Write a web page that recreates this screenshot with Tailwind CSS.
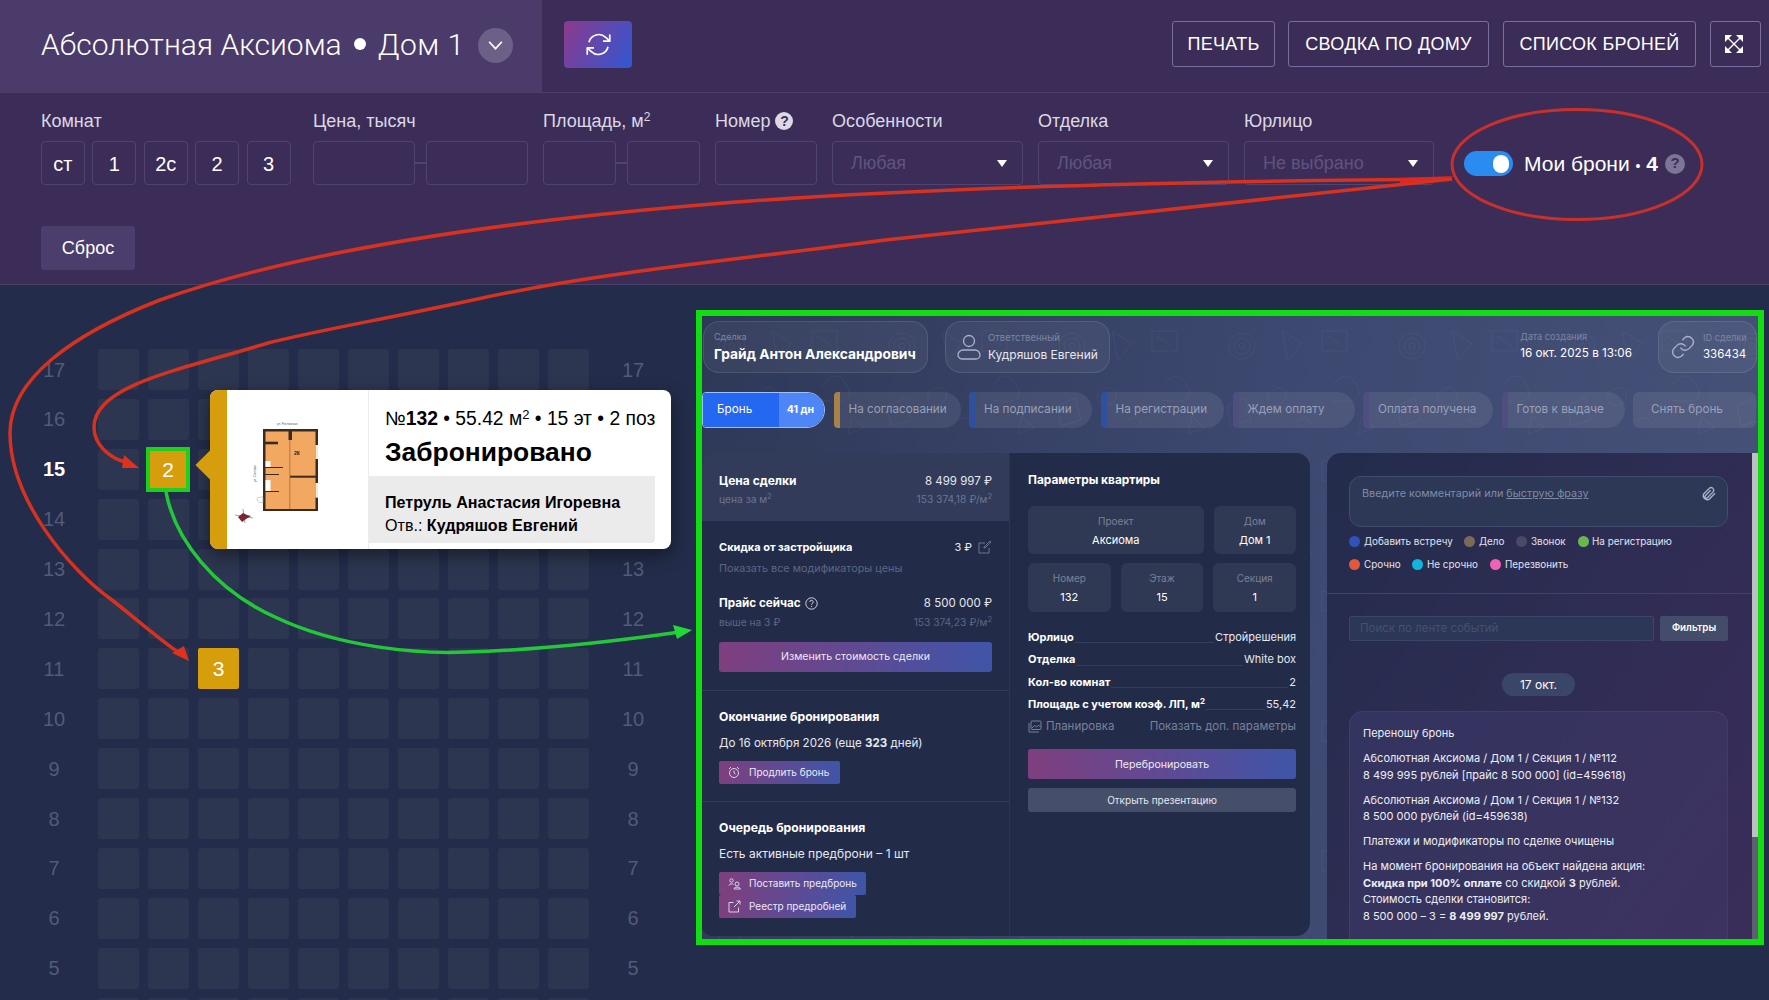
<!DOCTYPE html>
<html lang="ru">
<head>
  <meta charset="UTF-8">
  <title>Абсолютная Аксиома - Дом 1</title>
  <script src="https://cdn.jsdelivr.net/npm/@tailwindcss/browser@4"></script>
</head>
<body class="bg-[#232c4a] font-['Liberation_Sans',sans-serif] text-white">
<div class="relative h-[1000px] w-full overflow-hidden">

  <!-- шапка -->
  <header class="flex h-[93px] border-b border-[#4a3e68] bg-[#3b2d58]">
    <div class="flex h-[92px] w-[542px] items-center bg-[#4b3b6b] pb-[4px] pl-[41px]">
      <h1 class="flex w-[437px] items-center font-[Roboto,sans-serif] text-[30px] font-light whitespace-nowrap text-white">Абсолютная Аксиома<span class="mx-[12px] h-[12px] w-[12px] rounded-full bg-white"></span><span class="tracking-[0.5px]">Дом 1</span></h1>
      <button class="mt-[2px] flex h-[35px] w-[35px] items-center justify-center rounded-full bg-[#6c5f88]">
        <svg width="17" height="11" viewBox="0 0 16 10" fill="none" stroke="#fff" stroke-width="1.600"><path d="M2 1.500l6 6.500 6-6.500"/></svg>
      </button>
    </div>
    <button class="mt-[21px] ml-[22px] flex h-[47px] w-[68px] items-center justify-center rounded bg-[linear-gradient(120deg,#8c3a8c,#3157d2)]">
      <svg width="27" height="27" viewBox="0 0 24 24" fill="none" stroke="#fff" stroke-width="1.500" stroke-linejoin="round"><path d="M22 3v6h-6M2 21v-6h6"/><path d="M3.500 10a9 9 0 0 1 14.900-4.400L22 9M2 15l3.600 3.400A9 9 0 0 0 20.500 14"/></svg>
    </button>
    <div class="mt-[21px] ml-auto flex h-[46px] pr-[8px] text-[18px] tracking-[0.3px]">
      <button class="w-[103px] rounded-[3px] border-[1.500px] border-[#7a6ea0]">ПЕЧАТЬ</button>
      <button class="ml-[13px] w-[201px] rounded-[3px] border-[1.500px] border-[#7a6ea0]">СВОДКА ПО ДОМУ</button>
      <button class="ml-[14px] w-[193px] rounded-[3px] border-[1.500px] border-[#7a6ea0]">СПИСОК БРОНЕЙ</button>
      <button class="ml-[14px] flex w-[51px] items-center justify-center rounded-[3px] border-[1.500px] border-[#7a6ea0] pr-[3px]">
        <svg width="20" height="20" viewBox="0 0 20 20" fill="#fff" stroke="#fff"><path d="M3 3l14 14M17 3L3 17" stroke-width="1.400"/><path d="M1 1h7L1 8zM19 1v7l-7-7zM1 19v-7l7 7zM19 19h-7l7-7z" stroke="none"/></svg>
      </button>
    </div>
  </header>

  <!-- фильтры -->
  <section class="h-[192px] border-b border-[#4a4266] bg-[#3b2d58] pt-[16px] pl-[41px]">
    <div class="flex items-start">
      <div class="w-[249.500px]">
        <div class="h-6 text-[18px] leading-6 text-[#dcd8e6]">Комнат</div>
        <div class="mt-[8px] flex gap-[7.500px] text-[20px]">
          <button class="h-[44px] w-[44px] rounded border border-[#4f4470] pt-[2px]">ст</button>
          <button class="h-[44px] w-[44px] rounded border border-[#4f4470] pt-[2px]">1</button>
          <button class="h-[44px] w-[44px] rounded border border-[#4f4470] pt-[2px]">2с</button>
          <button class="h-[44px] w-[44px] rounded border border-[#4f4470] pt-[2px]">2</button>
          <button class="h-[44px] w-[44px] rounded border border-[#4f4470] pt-[2px]">3</button>
        </div>
      </div>
      <div class="ml-[22.500px] w-[215px]">
        <div class="h-6 text-[18px] leading-6 text-[#dcd8e6]">Цена, тысяч</div>
        <div class="mt-[8px] flex items-center">
          <div class="h-[44px] w-[102px] rounded border border-[#4f4470]"></div>
          <div class="h-[2px] w-[11px] bg-[#4f4470]"></div>
          <div class="h-[44px] w-[102px] rounded border border-[#4f4470]"></div>
        </div>
      </div>
      <div class="ml-[15px] w-[157px]">
        <div class="h-6 text-[18px] leading-6 text-[#dcd8e6]">Площадь, м<sup class="text-[12px]">2</sup></div>
        <div class="mt-[8px] flex items-center">
          <div class="h-[44px] w-[73px] rounded border border-[#4f4470]"></div>
          <div class="h-[2px] w-[11px] bg-[#4f4470]"></div>
          <div class="h-[44px] w-[73px] rounded border border-[#4f4470]"></div>
        </div>
      </div>
      <div class="ml-[15px] w-[102px]">
        <div class="flex h-6 items-center gap-[5px] text-[18px] leading-6 text-[#dcd8e6]">Номер
          <span class="flex h-[18px] w-[18px] items-center justify-center rounded-full bg-[#dcd8e6] text-[14px] font-bold text-[#3b2d58]">?</span>
        </div>
        <div class="mt-[8px] h-[44px] rounded border border-[#4f4470]"></div>
      </div>
      <div class="ml-[15px] w-[191px]">
        <div class="h-6 text-[18px] leading-6 text-[#dcd8e6]">Особенности</div>
        <div class="mt-[8px] flex h-[44px] items-center justify-between rounded border border-[#4f4470] pt-[1px] pr-[15px] pl-[18px] text-[18px] text-[#5f5480]">Любая
          <span class="h-0 w-0 border-x-[5.500px] border-t-[7px] border-x-transparent border-t-white"></span>
        </div>
      </div>
      <div class="ml-[15px] w-[191px]">
        <div class="h-6 text-[18px] leading-6 text-[#dcd8e6]">Отделка</div>
        <div class="mt-[8px] flex h-[44px] items-center justify-between rounded border border-[#4f4470] pt-[1px] pr-[15px] pl-[18px] text-[18px] text-[#5f5480]">Любая
          <span class="h-0 w-0 border-x-[5.500px] border-t-[7px] border-x-transparent border-t-white"></span>
        </div>
      </div>
      <div class="ml-[15px] w-[190px]">
        <div class="h-6 text-[18px] leading-6 text-[#dcd8e6]">Юрлицо</div>
        <div class="mt-[8px] flex h-[44px] items-center justify-between rounded border border-[#4f4470] pt-[1px] pr-[15px] pl-[18px] text-[18px] text-[#5f5480]">Не выбрано
          <span class="h-0 w-0 border-x-[5.500px] border-t-[7px] border-x-transparent border-t-white"></span>
        </div>
      </div>
      <div class="mt-[42px] ml-[30px] flex h-[25px] items-center">
        <div class="flex h-[25px] w-[49px] items-center justify-end rounded-full bg-[#2a8cf0] pr-[4px]"><span class="h-[18px] w-[16px] rounded-full bg-white"></span></div>
        <span class="ml-[11px] text-[21px] whitespace-nowrap">Мои брони <span class="text-[14px]">•</span> <b class="font-bold">4</b></span>
        <span class="ml-[7px] flex h-[20px] w-[20px] items-center justify-center rounded-full bg-[#7d7497] text-[15px] font-bold text-[#3b2d58]">?</span>
      </div>
    </div>
    <button class="mt-[41px] h-[44px] w-[94px] rounded-[3px] bg-[#4b3d6c] pt-[1px] text-[18px]">Сброс</button>
  </section>

  <!-- шахматка -->
  <main id="grid" class="flex flex-col gap-y-[8.900px] pt-[64px] pl-[28px]"></main>

  <!-- карточка квартиры -->
  <div class="absolute top-[390px] left-[210px] flex h-[159px] w-[461px] rounded-lg bg-white text-black shadow-[0_6px_18px_rgba(0,0,0,0.45)]">
    <span class="absolute top-[64px] left-[-10px] h-[22px] w-[22px] rotate-45 bg-[#d69e0c]"></span>
    <div class="relative w-[17px] rounded-l-lg bg-[#d69e0c]"></div>
    <div class="flex w-[142px] border-r border-[#ececec] pt-[37px] pl-[6px]">
      <svg class="overflow-visible" width="100" height="96" viewBox="0 0 100 96">
        <text x="44" y="-2" font-size="3" fill="#555">ул. Ростовская</text>
        <text x="0" y="0" font-size="3" fill="#555" transform="translate(23 55) rotate(-90)">ул. Степная</text>
        <rect x="30" y="2" width="55" height="82" fill="#f3a862"/>
        <g fill="#3a2a20">
          <rect x="30" y="2" width="55" height="2.500"/>
          <rect x="30" y="2" width="2.500" height="82"/>
          <rect x="30" y="82" width="55" height="2"/>
          <rect x="82.500" y="2" width="2.500" height="16"/>
          <rect x="82.500" y="32" width="2.500" height="24"/>
          <rect x="82.500" y="70.500" width="2.500" height="13.500"/>
          <rect x="55.500" y="2" width="3.500" height="11"/>
          <rect x="30" y="14.700" width="15" height="2.600"/>
          <rect x="57" y="48.700" width="26" height="2"/>
          <rect x="32" y="40" width="18" height="1"/>
          <rect x="32" y="47" width="14" height="1"/>
          <rect x="32" y="64" width="14" height="1"/>
        </g>
        <rect x="83" y="18" width="2" height="14" fill="#f4e8d8"/>
        <rect x="83" y="56" width="2" height="14.500" fill="#f4e8d8"/>
        <rect x="32.500" y="34" width="5" height="6" fill="#fff"/>
        <rect x="32.500" y="53" width="5" height="11" fill="#fff"/>
        <path d="M56.800 13v69" stroke="#a06a35" stroke-width=".8"/>
        <text x="61" y="28" font-size="5" font-weight="700" fill="#222">2К</text>
        <path d="M30 70q-7 0-6 3t6 3z" fill="#fff" stroke="#999" stroke-width=".5"/>
        <path d="M5 90l5-4 4 2 4 1-5 3-4 3z" fill="#8c1c2c"/>
        <path d="M10 82l2 14M2 88l18 3" stroke="#444" stroke-width=".5"/>
      </svg>
    </div>
    <div class="flex flex-1 flex-col">
      <div class="pt-[14px] pl-[16px]">
        <div class="h-[30px] text-[19.300px] leading-[30px] whitespace-nowrap">№<b>132</b> • 55.42 м<sup class="text-[13px]">2</sup> • 15 эт • 2 поз</div>
        <div class="text-[26.400px] leading-[36px] font-bold">Забронировано</div>
      </div>
      <div class="mt-[6px] mr-[16px] h-[67px] rounded-br bg-[#ebebeb] pt-[15px] pl-[16px] text-[16.100px] leading-[23px]">
        <div class="font-bold whitespace-nowrap">Петруль Анастасия Игоревна</div>
        <div class="whitespace-nowrap">Отв.: <b>Кудряшов Евгений</b></div>
      </div>
    </div>
  </div>

  <!-- вставка: карточка сделки -->
  <div class="absolute top-[310px] left-[696px] h-[635px] w-[1068px] border-[6px] border-[#11dd11] bg-[#222c49]">
    <div class="relative h-full w-full overflow-hidden bg-[linear-gradient(100deg,#2e3857,#3d4870_50%,#465278)] font-[Inter,sans-serif]">
      <svg class="absolute inset-0 h-full w-full opacity-[0.05]" xmlns="http://www.w3.org/2000/svg">
        <defs><pattern id="doodle" width="170" height="130" patternUnits="userSpaceOnUse">
          <g fill="none" stroke="#fff" stroke-width=".8"><circle cx="30" cy="30" r="13"/><circle cx="30" cy="30" r="8"/><circle cx="30" cy="30" r="3"/><path d="M70 15l20 12-14 18zM120 70q15-20 25 0t-25 14M15 90l18-8 6 22-20 6zM60 75c8-8 20 0 12 10s-22 2-14-10M110 15h25v20h-25zM115 20l15 10M150 100l12 12-16 6zM85 105q10-8 15 3"/></g>
        </pattern></defs>
        <rect width="100%" height="100%" fill="url(#doodle)"/>
      </svg>

      <div class="relative">
        <div class="flex pt-[5px] pl-[1px]">
          <div class="h-[52px] w-[225px] rounded-2xl border border-white/10 bg-white/5 pl-[10px]">
            <div class="mt-[8px] text-[9px] leading-[14px] text-[#7d86a2]">Сделка</div>
            <div class="text-[13.800px] leading-[20px] font-bold whitespace-nowrap">Грайд Антон Александрович</div>
          </div>
          <div class="ml-[17px] flex h-[52px] w-[165px] items-center rounded-2xl border border-white/10 bg-white/5 pl-[11px]">
            <svg width="24" height="27" viewBox="0 0 24 27" fill="none" stroke="#aab2c8" stroke-width="1.300"><circle cx="12" cy="7" r="5.500"/><path d="M6 16h12a5 5 0 0 1 5 5v0a4 4 0 0 1-4 4H5a4 4 0 0 1-4-4v0a5 5 0 0 1 5-5z"/></svg>
            <div class="ml-[7px]">
              <div class="text-[9.500px] leading-[14px] text-[#7d86a2]">Ответственный</div>
              <div class="mt-[1px] text-[12px] leading-[18px] whitespace-nowrap text-[#e6e8ef]">Кудряшов Евгений</div>
            </div>
          </div>
          <div class="ml-auto pt-[9px]">
            <div class="text-[9.200px] leading-[14px] text-[#7d86a2]">Дата создания</div>
            <div class="text-[11.700px] leading-[18px] whitespace-nowrap">16 окт. 2025 в 13:06</div>
          </div>
          <div class="mr-[1px] ml-[26px] flex h-[52px] w-[99px] items-center rounded-2xl border border-white/10 bg-white/5 pl-[11px]">
            <svg width="26" height="26" viewBox="0 0 24 24" fill="none" stroke="#aab2c8" stroke-width="1.300" stroke-linecap="round"><path d="M10 13a5 5 0 0 0 7.500.5l3-3a5 5 0 0 0-7-7l-1.700 1.700"/><path d="M14 11a5 5 0 0 0-7.500-.5l-3 3a5 5 0 0 0 7 7l1.700-1.700"/></svg>
            <div class="ml-[7px]">
              <div class="text-[9.200px] leading-[14px] whitespace-nowrap text-[#7d86a2]">ID сделки</div>
              <div class="text-[11.500px] leading-[18px]">336434</div>
            </div>
          </div>
        </div>

        <!-- статусы -->
        <div class="mt-[19px] flex h-[36px] gap-[8.500px] text-[11.700px] whitespace-nowrap text-[#98a0b8]">
          <div class="flex w-[123px] overflow-hidden rounded-l rounded-r-[18px] border border-[#9cc0ff] text-white">
            <div class="flex w-[76px] items-center bg-[#2468f2] pl-[14px]">Бронь</div>
            <div class="flex flex-1 items-center justify-center bg-[#4f86f7] pr-[2px] text-[10.500px] font-bold">41 дн</div>
          </div>
          <div class="flex w-[127px] items-center rounded-l rounded-r-[18px] border-l-[6px] border-[#a58246] bg-white/8 pl-[9px]">На согласовании</div>
          <div class="flex w-[123px] items-center rounded-l rounded-r-[18px] border-l-[6px] border-[#2f4f9f] bg-white/8 pl-[9px]">На подписании</div>
          <div class="flex w-[123.500px] items-center rounded-l rounded-r-[18px] border-l-[6px] border-[#2f4f9f] bg-white/8 pl-[9px]">На регистрации</div>
          <div class="flex w-[122px] items-center rounded-l rounded-r-[18px] border-l-[6px] border-[#4f4f7f] bg-white/8 pl-[9px]">Ждем оплату</div>
          <div class="flex w-[130px] items-center rounded-l rounded-r-[18px] border-l-[6px] border-[#4f4f7f] bg-white/8 pl-[9px]">Оплата получена</div>
          <div class="flex w-[123px] items-center rounded-l rounded-r-[18px] border-l-[6px] border-[#4f4f7f] bg-white/8 pl-[9px]">Готов к выдаче</div>
          <div class="flex w-[123px] items-center rounded-md bg-white/8 pl-[18px]">Снять бронь</div>
        </div>

        <!-- панели -->
        <div class="mt-[25px] flex h-[486px] gap-[17px]">
          <div class="flex h-[483px] w-[608px] overflow-hidden rounded-r-[14px] rounded-l-[10px] bg-[#222c49]">
            <div class="w-[307px]">
              <div class="h-[68px] bg-[#323b5a] px-[17px] pt-[18px]">
                <div class="flex justify-between text-[12px] leading-5"><b>Цена сделки</b><span class="text-[11.500px] text-[#e6e8ef]">8 499 997 ₽</span></div>
                <div class="flex justify-between text-[10.200px] leading-4 text-[#6c7590]"><span>цена за м<sup class="text-[7.500px]">2</sup></span><span>153 374,18 ₽/м<sup class="text-[7.500px]">2</sup></span></div>
              </div>
              <div class="border-b border-[#323c5a] px-[17px] pt-[16px] pb-[18px]">
                <div class="flex justify-between text-[11px] leading-5"><b>Скидка от застройщика</b>
                  <span class="flex items-center gap-[6px] text-[#e6e8ef]">3 ₽
                    <svg width="14" height="14" viewBox="0 0 14 14" fill="none" stroke="#6c7590"><path d="M11 8v5H1V3h6M6 8l1 0 6-6-1-1-6 6z"/></svg>
                  </span>
                </div>
                <div class="mt-[4px] text-[10.800px] leading-4 text-[#5c6683]">Показать все модификаторы цены</div>
                <div class="mt-[16px] flex justify-between text-[11.700px] leading-5">
                  <span class="flex items-center gap-[4px] font-bold">Прайс сейчас
                    <svg width="13" height="13" viewBox="0 0 13 13" fill="none" stroke="#cfd3e0"><circle cx="6.500" cy="6.500" r="5.700"/><path d="M4.800 5a1.700 1.700 0 1 1 2.300 1.600c-.5.200-.6.500-.6 1.100M6.500 9v1"/></svg>
                  </span><span class="text-[11.500px] text-[#e6e8ef]">8 500 000 ₽</span>
                </div>
                <div class="mt-[1px] flex justify-between text-[10.200px] leading-4 text-[#5c6683]"><span>выше на 3 ₽</span><span>153 374,23 ₽/м<sup class="text-[7.500px]">2</sup></span></div>
                <button class="mt-[12px] h-[30px] w-full rounded-[3px] bg-[linear-gradient(90deg,#7f3f7e,#3f55a8)] text-[10.600px] text-[#eceaf3]">Изменить стоимость сделки</button>
              </div>
              <div class="border-b border-[#323c5a] px-[17px] pt-[16px] pb-[17px]">
                <div class="text-[12.200px] leading-5 font-bold">Окончание бронирования</div>
                <div class="mt-[6px] text-[11.600px] leading-5 text-[#e6e8ef]">До 16 октября 2026 (еще <b>323</b> дней)</div>
                <button class="mt-[8px] flex h-[23px] w-[121px] items-center rounded-[2px] bg-[linear-gradient(90deg,#7f3f7e,#3f55a8)] pl-[9px] text-[10px] whitespace-nowrap text-[#eceaf3]">
                  <svg width="12" height="13" viewBox="0 0 12 13" fill="none" stroke="#d8d4e4"><circle cx="6" cy="7" r="4.500"/><path d="M6 4.500V7l1.500 1M1 3l2-2M11 3L9 1"/></svg>
                  <span class="ml-[9px]">Продлить бронь</span>
                </button>
              </div>
              <div class="px-[17px] pt-[16px]">
                <div class="text-[12.200px] leading-5 font-bold">Очередь бронирования</div>
                <div class="mt-[6px] text-[12px] leading-5 text-[#e6e8ef]">Есть активные предброни – 1 шт</div>
                <button class="mt-[8px] flex h-[23px] w-[147px] items-center rounded-[2px] bg-[linear-gradient(90deg,#7f3f7e,#3f55a8)] pl-[9px] text-[10px] whitespace-nowrap text-[#eceaf3]">
                  <svg width="13" height="12" viewBox="0 0 13 12" fill="none" stroke="#d8d4e4"><circle cx="3.500" cy="2.500" r="1.700"/><circle cx="9" cy="6" r="2"/><path d="M1 7.500c0-2 4-2 4.500-1M6 11c0-2.500 6-2.500 6.500 0z"/></svg>
                  <span class="ml-[8px]">Поставить предбронь</span>
                </button>
                <button class="flex h-[23px] w-[137px] items-center rounded-[2px] bg-[linear-gradient(90deg,#7f3f7e,#3f55a8)] pl-[9px] text-[10px] whitespace-nowrap text-[#eceaf3]">
                  <svg width="13" height="13" viewBox="0 0 13 13" fill="none" stroke="#d8d4e4"><path d="M10.500 7.500V12H1V2.500h4.500M6 7l6-6M8.500 1H12v3.500"/></svg>
                  <span class="ml-[8px]">Реестр предробней</span>
                </button>
              </div>
            </div>

            <div class="w-[301px] border-l border-[#2c3654] pt-[17px] pr-[14px] pl-[18px]">
              <div class="text-[11.900px] leading-5 font-bold">Параметры квартиры</div>
              <div class="mt-[16px] flex gap-[10px] text-center">
                <div class="h-[48px] w-[175.500px] rounded-md bg-[#303953] pt-[7px]"><div class="text-[10px] leading-4 text-[#79819a]">Проект</div><div class="mt-[3px] text-[11px] leading-4">Аксиома</div></div>
                <div class="h-[48px] flex-1 rounded-md bg-[#303953] pt-[7px]"><div class="text-[10px] leading-4 text-[#79819a]">Дом</div><div class="mt-[3px] text-[11px] leading-4">Дом 1</div></div>
              </div>
              <div class="mt-[9px] grid grid-cols-3 gap-[10px] text-center">
                <div class="h-[49px] rounded-md bg-[#303953] pt-[7px]"><div class="text-[10px] leading-4 text-[#79819a]">Номер</div><div class="mt-[3px] text-[11px] leading-4">132</div></div>
                <div class="h-[49px] rounded-md bg-[#303953] pt-[7px]"><div class="text-[10px] leading-4 text-[#79819a]">Этаж</div><div class="mt-[3px] text-[11px] leading-4">15</div></div>
                <div class="h-[49px] rounded-md bg-[#303953] pt-[7px]"><div class="text-[10px] leading-4 text-[#79819a]">Секция</div><div class="mt-[3px] text-[11px] leading-4">1</div></div>
              </div>
              <div class="mt-[14px] text-[11px] leading-[22.300px]">
                <div class="flex"><b>Юрлицо</b><span class="mx-[1px] mb-[5px] flex-1 border-b border-[#343e5c]"></span><span class="text-[#e6e8ef]">Стройрешения</span></div>
                <div class="flex"><b>Отделка</b><span class="mx-[1px] mb-[5px] flex-1 border-b border-[#343e5c]"></span><span class="text-[#e6e8ef]">White box</span></div>
                <div class="flex"><b>Кол-во комнат</b><span class="mx-[1px] mb-[5px] flex-1 border-b border-[#343e5c]"></span><span class="text-[#e6e8ef]">2</span></div>
                <div class="flex"><b>Площадь с учетом коэф. ЛП, м<sup class="text-[8px]">2</sup></b><span class="mx-[1px] mb-[5px] flex-1 border-b border-[#343e5c]"></span><span class="text-[#e6e8ef]">55,42</span></div>
                <div class="flex justify-between text-[11.500px] text-[#79819a]">
                  <span class="flex items-center gap-[4px]">
                    <svg width="14" height="13" viewBox="0 0 14 13" fill="none" stroke="#79819a"><rect x="3" y="1" width="10" height="8.500" rx="1"/><path d="M1 3v9h10M4 8l2.500-2.500 2 1.500 2-2 2 2" /></svg>
                    Планировка</span>
                  <span>Показать доп. параметры</span>
                </div>
              </div>
              <button class="mt-[12px] h-[30px] w-full rounded-[3px] bg-[linear-gradient(90deg,#7f3f7e,#3f55a8)] text-[10.600px] text-[#eceaf3]">Перебронировать</button>
              <button class="mt-[9px] h-[24px] w-full rounded-[3px] bg-[#464f69] text-[10px] text-[#e6e8ef]">Открыть презентацию</button>
            </div>
          </div>

          <!-- лента -->
          <div class="relative h-[486px] w-[425px] overflow-hidden rounded-tl-[14px] bg-[linear-gradient(125deg,#232c4c,#3a2d5a)]">
            <div class="border-b border-[#3e4565] pt-[23px] pr-[24px] pb-[20px] pl-[22px]">
              <div class="flex h-[51px] justify-between rounded-xl border border-[#414c6e] bg-[#2c3856] pt-[8px] pr-[10px] pl-[12px] text-[10.850px] leading-4 text-[#808aa5]">
                <span>Введите комментарий или <u>быструю фразу</u></span>
                <svg width="16" height="18" viewBox="0 0 24 24" fill="none" stroke="#aab2c8" stroke-width="2"><path d="M21 11l-9 9a6 6 0 0 1-8-8l9-9a4 4 0 0 1 5.500 5.500l-9 9a2 2 0 0 1-3-3l8-8"/></svg>
              </div>
              <div class="mt-[5px] flex h-[18px] items-center text-[9.900px] whitespace-nowrap text-[#e0e2ec]">
                <span class="h-[11px] w-[11px] rounded-full bg-[#3153b8]"></span><span class="ml-[4px] w-[100px]">Добавить встречу</span>
                <span class="h-[11px] w-[11px] rounded-full bg-[#7b6a55]"></span><span class="ml-[4px] w-[37px]">Дело</span>
                <span class="h-[11px] w-[11px] rounded-full bg-[#484a68]"></span><span class="ml-[4px] w-[47px]">Звонок</span>
                <span class="h-[11px] w-[11px] rounded-full bg-[#69b84c]"></span><span class="ml-[3px]">На регистрацию</span>
              </div>
              <div class="mt-[5px] flex h-[18px] items-center text-[9.900px] whitespace-nowrap text-[#e0e2ec]">
                <span class="h-[11px] w-[11px] rounded-full bg-[#e2583d]"></span><span class="ml-[4px] w-[48px]">Срочно</span>
                <span class="h-[11px] w-[11px] rounded-full bg-[#14b5dc]"></span><span class="ml-[4px] w-[63px]">Не срочно</span>
                <span class="h-[11px] w-[11px] rounded-full bg-[#ee62b8]"></span><span class="ml-[4px]">Перезвонить</span>
              </div>
            </div>
            <div class="mt-[22px] flex h-[25px] pr-[24px] pl-[22px] text-[11.500px]">
              <div class="flex w-[305px] items-center rounded-[2px] border border-[#3a4668] bg-[#2c3656] pl-[10px] text-[#465070]">Поиск по ленте событий</div>
              <button class="ml-[6px] flex-1 rounded-[2px] bg-[#434c69] text-[9.800px] font-semibold">Фильтры</button>
            </div>
            <div class="mt-[32px] mr-[2px] flex justify-center">
              <span class="flex h-[23px] w-[73px] items-center justify-center rounded-full bg-[#3a4668] text-[12px]">17 окт.</span>
            </div>
            <div class="mt-[15px] mr-[24px] ml-[22px] h-[300px] rounded-t-[14px] border border-white/5 bg-[linear-gradient(125deg,#33345f,#3e3260)] px-[13px] pt-[13px] text-[11px] leading-[16.500px] text-[#eceef4]">
              <p class="mb-[8.500px]">Переношу бронь</p>
              <p class="mb-[8.500px]">Абсолютная Аксиома / Дом 1 / Секция 1 / №112<br>8 499 995 рублей [прайс 8 500 000] (id=459618)</p>
              <p class="mb-[8.500px]">Абсолютная Аксиома / Дом 1 / Секция 1 / №132<br>8 500 000 рублей (id=459638)</p>
              <p class="mb-[8.500px]">Платежи и модификаторы по сделке очищены</p>
              <p>На момент бронирования на объект найдена акция:<br><b>Скидка при 100% оплате</b> со скидкой <b>3</b> рублей.<br>Стоимость сделки становится:<br>8 500 000 – 3 = <b>8 499 997</b> рублей.</p>
            </div>
          </div>
          <div class="ml-[-17px] w-[6px]">
            <div class="h-[384px] bg-[#bfc0c4]"></div>
            <div class="h-[102px] bg-[#5e6072]"></div>
          </div>
        </div>
      </div>
    </div>
  </div>

  <!-- стрелки поверх -->
  <svg class="pointer-events-none absolute top-0 left-0" width="1769" height="1000" viewBox="0 0 1769 1000" fill="none">
    <ellipse cx="1577" cy="164.500" rx="125" ry="55" stroke="#c9302c" stroke-width="3"/>
    <g stroke="#d6321f" stroke-width="3.500">
      <path d="M1452 179C1200 181 900 188 700 205C500 222 300 250 160 300C70 335 10 380 10 433C10 500 70 570 112 600C135 618 160 640 178 652"/>
      <path d="M1452 179C1250 200 1050 222 885 240C720 262 600 272 473 300C380 320 320 330 268 343C180 370 94 385 94 427C94 445 110 458 125 462"/>
    </g>
    <path d="M1456 176L1400 178L1400 184Z" fill="#e0281e"/>
    <polygon points="189,661 172,653 184,646" fill="#e0301e"/>
    <polygon points="139,468 124,455 122,468" fill="#e0301e"/>
    <path d="M166 492C175 540 215 590 275 617C340 648 420 654 466 652C540 650 610 642 680 632" stroke="#22c838" stroke-width="3.500"/>
    <polygon points="692,630 673,625 677,639" fill="#22d838"/>
  </svg>

  <!-- подсвеченная квартира -->
  <div class="absolute top-[447px] left-[146px] flex h-[45px] w-[44px] items-center justify-center border-[4px] border-[#1ed01e] bg-[#d69e0c] text-[21px]">2</div>
</div>

<script>
  // этажи и клетки
  const grid = document.getElementById('grid');
  for (let floor = 17; floor >= 4; floor--) {
    const current = floor === 15;
    // подпись 4 этажа за краем, правые 14-16 закрыты карточкой
    const leftLabel = floor === 4 ? '' : floor;
    const rightLabel = (floor === 4 || (floor >= 14 && floor <= 16)) ? '' : floor;
    const labelCls = current
      ? 'w-[52px] text-center text-[20px] font-bold text-white'
      : 'w-[52px] text-center text-[20px] text-[#525b78]';
    let cells = '';
    for (let col = 1; col <= 10; col++) {
      if (floor === 11 && col === 3) {
        cells += '<div class="flex h-[41px] w-[41px] items-center justify-center rounded-[2px] bg-[#d79e0b] text-[21px] text-white">3</div>';
      } else {
        cells += '<div class="h-[41px] w-[41px] rounded-[3px] bg-[#2d3650]"></div>';
      }
    }
    grid.insertAdjacentHTML('beforeend', `
      <div class="flex items-center">
        <div class="${labelCls}">${leftLabel}</div>
        <div class="ml-[18px] flex gap-[9px]">${cells}</div>
        <div class="ml-[18px] w-[52px] text-center text-[20px] text-[#525b78]">${rightLabel}</div>
      </div>`);
  }
</script>
</body>
</html>
